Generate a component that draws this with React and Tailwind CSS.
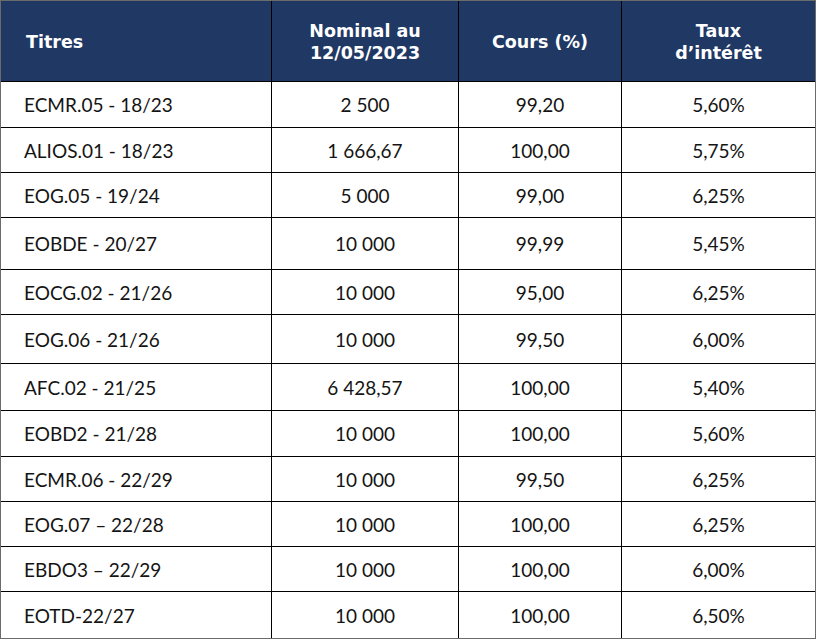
const rows = [
  { titre: 'ECMR.05 - 18/23', nominal: '2 500', cours: '99,20', taux: '5,60%', h: 'h-[46px]' },
  { titre: 'ALIOS.01 - 18/23', nominal: '1 666,67', cours: '100,00', taux: '5,75%', h: 'h-[45px]' },
  { titre: 'EOG.05 - 19/24', nominal: '5 000', cours: '99,00', taux: '6,25%', h: 'h-[45px]' },
  { titre: 'EOBDE - 20/27', nominal: '10 000', cours: '99,99', taux: '5,45%', h: 'h-[52px]' },
  { titre: 'EOCG.02 - 21/26', nominal: '10 000', cours: '95,00', taux: '6,25%', h: 'h-[45px]' },
  { titre: 'EOG.06 - 21/26', nominal: '10 000', cours: '99,50', taux: '6,00%', h: 'h-[49px]' },
  { titre: 'AFC.02 - 21/25', nominal: '6 428,57', cours: '100,00', taux: '5,40%', h: 'h-[47px]' },
  { titre: 'EOBD2 - 21/28', nominal: '10 000', cours: '100,00', taux: '5,60%', h: 'h-[46px]' },
  { titre: 'ECMR.06 - 22/29', nominal: '10 000', cours: '99,50', taux: '6,25%', h: 'h-[45px]' },
  { titre: 'EOG.07 – 22/28', nominal: '10 000', cours: '100,00', taux: '6,25%', h: 'h-[45px]' },
  { titre: 'EBDO3 – 22/29', nominal: '10 000', cours: '100,00', taux: '6,00%', h: 'h-[45px]' },
  { titre: 'EOTD-22/27', nominal: '10 000', cours: '100,00', taux: '6,50%', h: 'h-[46px]' },
]

const cols = 'grid grid-cols-[271px_187px_163px_193px]'

export default function App() {
  return (
    <div className="bg-white min-h-screen" style={{ fontFamily: 'Lato, "Open Sans", sans-serif' }}>
      <div className="w-[816px] border border-[#6b6b6b] text-[#141414]">
        <div
          className={`${cols} h-[81px] bg-[#203864] text-white font-bold text-[17.5px] leading-[22px] border-b border-black`}
          style={{ fontFamily: '"DejaVu Sans", Lato, sans-serif' }}
        >
          <div className="flex items-center pl-[25px] pt-[2px] border-r border-black">Titres</div>
          <div className="flex items-center justify-center text-center pt-[2px] border-r border-black">
            Nominal au
            <br />
            12/05/2023
          </div>
          <div className="flex items-center justify-center pt-[2px] border-r border-black">Cours (%)</div>
          <div className="flex items-center justify-center text-center pt-[2px]">
            Taux
            <br />
            d’intérêt
          </div>
        </div>
        {rows.map((r, i) => (
          <div
            key={r.titre}
            className={`${cols} ${r.h} text-[19px] ${i < rows.length - 1 ? 'border-b border-black' : ''}`}
          >
            <div className="flex items-center pl-[23px] pt-[2px] border-r border-black">{r.titre}</div>
            <div className="flex items-center justify-center pt-[2px] border-r border-black">{r.nominal}</div>
            <div className="flex items-center justify-center pt-[2px] border-r border-black">{r.cours}</div>
            <div className="flex items-center justify-center pt-[2px]">{r.taux}</div>
          </div>
        ))}
      </div>
    </div>
  )
}
